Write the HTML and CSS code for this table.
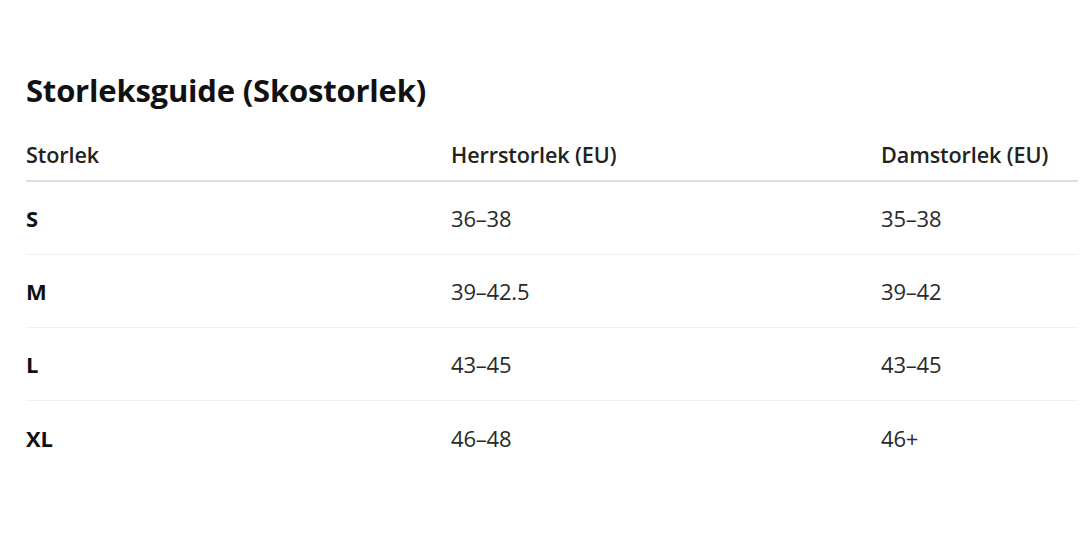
FILE: index.html
```html
<!DOCTYPE html>
<html lang="sv">
<head>
<meta charset="utf-8">
<link rel="stylesheet" href="styles.css">
</head>
<body>
<main class="guide">
  <h1 class="title">Storleksguide (Skostorlek)</h1>
  <div class="table">
    <div class="row head">
      <div class="cell">Storlek</div>
      <div class="cell">Herrstorlek (EU)</div>
      <div class="cell">Damstorlek (EU)</div>
    </div>
    <div class="row">
      <div class="cell size">S</div>
      <div class="cell">36–38</div>
      <div class="cell">35–38</div>
    </div>
    <div class="row">
      <div class="cell size">M</div>
      <div class="cell">39–42.5</div>
      <div class="cell">39–42</div>
    </div>
    <div class="row">
      <div class="cell size">L</div>
      <div class="cell">43–45</div>
      <div class="cell">43–45</div>
    </div>
    <div class="row last">
      <div class="cell size">XL</div>
      <div class="cell">46–48</div>
      <div class="cell">46+</div>
    </div>
  </div>
</main>
</body>
</html>
```

FILE: styles.css
```css
html, body {
  margin: 0;
  padding: 0;
  background: #ffffff;
}
body {
  font-family: "Open Sans", "Noto Sans", sans-serif;
  color: #2a2a2a;
  overflow: hidden;
}
.guide {
  padding: 68px 0 0 26px;
  width: 1052px;
}
.title {
  margin: 0 0 28px 0;
  font-size: 31px;
  line-height: 44px;
  font-weight: 700;
  color: #111;
  letter-spacing: -0.2px;
}
.table {
  display: flex;
  flex-direction: column;
}
.row {
  box-sizing: border-box;
  display: grid;
  grid-template-columns: 425px 430px 1fr;
  align-items: center;
  height: 73px;
  border-bottom: 1px solid #f0f0f0;
  font-size: 22px;
  letter-spacing: -0.2px;
}
.row.head {
  height: 42px;
  border-bottom: 2px solid #dedede;
  font-weight: 600;
  color: #222;
  font-size: 21.6px;
  line-height: 30px;
  letter-spacing: -0.1px;
  align-items: start;
}
.row.last {
  border-bottom: none;
}
.cell.size {
  font-weight: 700;
  color: #111;
}
```
